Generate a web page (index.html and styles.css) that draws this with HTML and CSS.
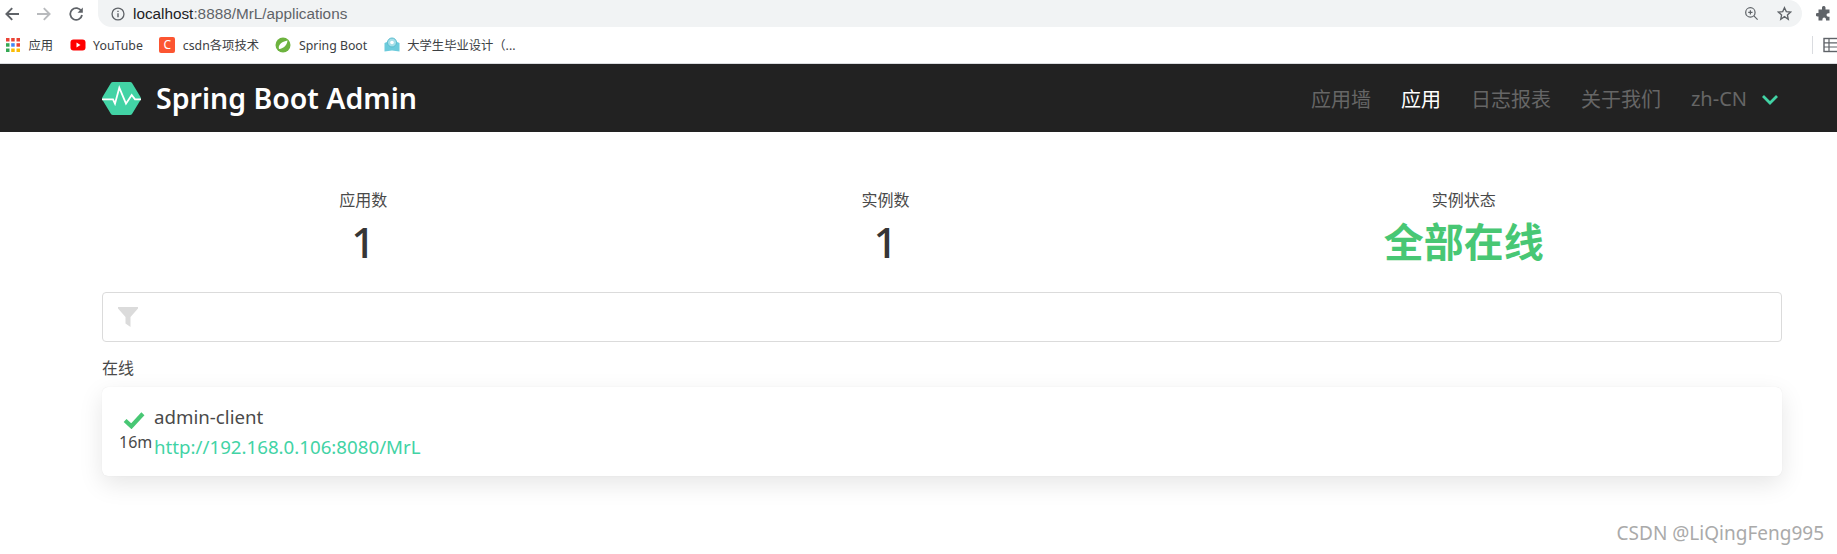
FILE: index.html

```html
<!DOCTYPE html>
<html lang="zh-CN">
<head>
  <meta charset="UTF-8" />
  <title>Spring Boot Admin</title>
  <link rel="stylesheet" href="styles.css">
</head>
<body>
  <div class="toolbar">
    <div class="nav-buttons">
      <svg class="tool-icon" viewBox="0 0 14 14"><path d="M14 7H1.500M7.200 1.200L1.400 7l5.800 5.800" fill="none" stroke="#5f6368" stroke-width="1.900"/></svg>
      <svg class="tool-icon" viewBox="0 0 14 14"><path d="M0 7h12.500M6.800 1.200L12.600 7l-5.800 5.800" fill="none" stroke="#b8babd" stroke-width="1.900"/></svg>
      <svg class="tool-icon" viewBox="0 0 14 14"><path d="M12.400 4.200A5.900 5.900 0 1 0 13 8" fill="none" stroke="#5f6368" stroke-width="1.800"/><path d="M13.800 0.500v5.300H8.500z" fill="#5f6368"/></svg>
    </div>
    <div class="omnibox">
      <svg class="info-icon" viewBox="0 0 16 16"><circle cx="8" cy="8" r="6.800" fill="none" stroke="#5f6368" stroke-width="1.500"/><path d="M7.200 7h1.600v4.800H7.200zM7.200 4.200h1.600v1.600H7.200z" fill="#5f6368"/></svg>
      <span class="url"><b>localhost</b>:8888/MrL/applications</span>
      <div class="omnibox-right">
        <svg class="omni-icon" viewBox="0 0 16 16"><circle cx="6.800" cy="6.800" r="5" fill="none" stroke="#5f6368" stroke-width="1.300"/><path d="M10.500 10.500l4 4M4.500 6.800h4.600M6.800 4.500v4.600" stroke="#5f6368" stroke-width="1.300" fill="none"/></svg>
        <svg class="omni-icon" viewBox="0 0 16 16"><path d="M8 1.800l1.900 4.200 4.600.5-3.400 3.100.9 4.500L8 11.300l-4 2.800.9-4.500-3.400-3.100 4.600-.5z" fill="none" stroke="#5f6368" stroke-width="1.400"/></svg>
      </div>
    </div>
    <svg class="puzzle" viewBox="0 0 16 16"><path d="M6 1.500a1.800 1.800 0 0 1 3.500 0V3.500h4v3.700h-1.200a1.800 1.800 0 0 0 0 3.600h1.200v3.700H10v-1.100a1.800 1.800 0 0 0-3.600 0v1.100H2.500v-4H1.500a1.800 1.800 0 0 1 0-3.600h1V3.500H6z" fill="#5f6368"/></svg>
  </div>

  <div class="bookmarks">
    <span class="bookmark">
      <svg class="bm-icon" viewBox="0 0 16 16">
        <g fill="#ea4335"><rect x="1" y="1" width="3.500" height="3.500"/><rect x="6.200" y="1" width="3.500" height="3.500"/><rect x="11.500" y="1" width="3.500" height="3.500"/></g>
        <rect x="1" y="6.200" width="3.500" height="3.500" fill="#34a853"/><rect x="6.200" y="6.200" width="3.500" height="3.500" fill="#4285f4"/><rect x="11.500" y="6.200" width="3.500" height="3.500" fill="#ea4335"/>
        <rect x="1" y="11.500" width="3.500" height="3.500" fill="#34a853"/><rect x="6.200" y="11.500" width="3.500" height="3.500" fill="#fbbc05"/><rect x="11.500" y="11.500" width="3.500" height="3.500" fill="#fbbc05"/>
      </svg>
      应用
    </span>
    <span class="bookmark">
      <svg class="bm-icon" viewBox="0 0 16 16"><rect x="0.500" y="2.500" width="15" height="11" rx="3" fill="#f00"/><path d="M6.500 5.500l4 2.500-4 2.500z" fill="#fff"/></svg>
      YouTube
    </span>
    <span class="bookmark">
      <span class="csdn-icon">C</span>
      csdn各项技术
    </span>
    <span class="bookmark">
      <svg class="bm-icon" viewBox="0 0 16 16"><circle cx="8" cy="8" r="7.500" fill="#6db33f"/><path d="M12.500 3.500C12 8 9 11.500 4 12c-1-3 1-7 8.500-8.500z" fill="#fff"/></svg>
      Spring Boot
    </span>
    <span class="bookmark">
      <svg class="bm-icon" viewBox="0 0 16 16"><path d="M0.500 6l3.500-1.500L8 7l4-2.500L15.500 6v8.500L8 13.500l-7.500 1z" fill="#6ccbdc"/><circle cx="8" cy="5.500" r="4.500" fill="#a5dfe9" stroke="#58bccf"/><circle cx="8" cy="5.500" r="1.800" fill="#fff"/></svg>
      大学生毕业设计（...
    </span>
    <span class="reading-list">
      <svg class="list-icon" viewBox="0 0 16 16"><rect x="1" y="1.500" width="14" height="13" fill="none" stroke="#5f6368" stroke-width="1.400"/><path d="M1 5.800h14M1 10h14M6 1.500v13" stroke="#5f6368" stroke-width="1.200"/></svg>
    </span>
  </div>

  <nav class="navbar">
    <div class="brand">
      <svg class="logo" viewBox="0 0 39 35">
        <path d="M11 1h17q1.500 0 2.200 1.300L38.500 16q.8 1.500 0 3l-8.300 13.700Q29.500 34 28 34H11q-1.500 0-2.200-1.300L.5 19q-.8-1.500 0-3L8.800 2.300Q9.500 1 11 1z" fill="#42d3a5"/>
        <path d="M0 18.300h11l2 4.400 4.300-16 6.700 16 5.700-8.700 3.300 4.300h6" fill="none" stroke="#fff" stroke-width="1.800"/>
      </svg>
      <span class="brand-name">Spring Boot Admin</span>
    </div>
    <div class="menu">
      <a class="menu-item">应用墙</a>
      <a class="menu-item active">应用</a>
      <a class="menu-item">日志报表</a>
      <a class="menu-item">关于我们</a>
      <a class="menu-item lang">zh-CN
        <svg class="chevron" viewBox="0 0 18 12"><path d="M2 2l7 7 7-7" fill="none" stroke="#42d3a5" stroke-width="2.800"/></svg>
      </a>
    </div>
  </nav>

  <main class="content">
    <div class="stats">
      <div class="stat">
        <p class="stat-label">应用数</p>
        <p class="stat-value">1</p>
      </div>
      <div class="stat">
        <p class="stat-label">实例数</p>
        <p class="stat-value">1</p>
      </div>
      <div class="stat">
        <p class="stat-label">实例状态</p>
        <p class="stat-value up">全部在线</p>
      </div>
    </div>

    <div class="filter">
      <svg class="filter-icon" viewBox="0 0 20 20"><path d="M0 0h20v1.500L12.500 10v10l-5-3.500V10L0 1.500z" fill="#dbdbdb"/></svg>
    </div>

    <p class="group-title">在线</p>

    <div class="card">
      <svg class="check" viewBox="0 0 21 17"><path d="M2 9l6 5.500L19 2.500" fill="none" stroke="#48c774" stroke-width="4"/></svg>
      <span class="app-name">admin-client</span>
      <span class="since">16m</span>
      <a class="app-url">http://192.168.0.106:8080/MrL</a>
    </div>
  </main>

  <div class="watermark">CSDN @LiQingFeng995</div>
</body>
</html>
```

FILE: styles.css

```css
html, body {
  margin: 0;
  padding: 0;
}
body {
  position: relative;
  height: 554px;
  overflow: hidden;
  background-color: white;
  color: #4a4a4a;
  font-family: "Noto Sans", "Noto Sans CJK SC", sans-serif;
  font-size: 16px;
}
p {
  margin: 0;
}

/* browser chrome */
.toolbar {
  display: flex;
  align-items: center;
  height: 27px;
  background-color: white;
}
.nav-buttons {
  display: flex;
  align-items: center;
  gap: 18px;
  width: 98px;
  padding-left: 5px;
  box-sizing: border-box;
}
.tool-icon {
  width: 14px;
  height: 14px;
}
.omnibox {
  display: flex;
  align-items: center;
  width: 1704px;
  height: 27px;
  padding: 0 10px 0 13px;
  box-sizing: border-box;
  background-color: #f1f3f4;
  border-radius: 0 14px 14px 14px;
}
.info-icon {
  width: 14px;
  height: 14px;
  margin-right: 8px;
}
.url {
  font-family: "Liberation Sans", sans-serif;
  font-size: 15.3px;
  color: #5f6368;
}
.url b {
  font-weight: normal;
  color: #202124;
}
.omnibox-right {
  display: flex;
  align-items: center;
  gap: 18px;
  margin-left: auto;
}
.omni-icon {
  width: 15px;
  height: 15px;
}
.puzzle {
  width: 16px;
  height: 16px;
  margin-left: 14px;
}
.bookmarks {
  display: flex;
  align-items: center;
  gap: 16.500px;
  height: 37px;
  padding-left: 5px;
  border-bottom: 1px solid #dadce0;
  box-sizing: border-box;
  font-size: 12.3px;
  color: #3c4043;
}
.bookmark {
  display: flex;
  align-items: center;
  gap: 7.500px;
}
.bm-icon {
  width: 16px;
  height: 16px;
}
.csdn-icon {
  width: 16px;
  height: 16px;
  background-color: #fc5531;
  border-radius: 2px;
  color: white;
  font-size: 12px;
  line-height: 16px;
  text-align: center;
}
.reading-list {
  margin-left: auto;
  padding-left: 10px;
  height: 18px;
  border-left: 1px solid #dadce0;
  display: flex;
  align-items: center;
  width: 14px;
  overflow: hidden;
}
.list-icon {
  flex: none;
  width: 16px;
  height: 16px;
}

/* app navbar */
.navbar {
  display: flex;
  align-items: center;
  justify-content: space-between;
  height: 68px;
  padding: 0 58px 0 102px;
  background-color: #222;
}
.brand {
  display: flex;
  align-items: center;
  gap: 15px;
}
.logo {
  width: 39px;
  height: 35px;
}
.brand-name {
  color: white;
  font-size: 28.5px;
  font-weight: 600;
}
.menu {
  display: flex;
  align-items: center;
  gap: 30px;
}
.menu-item {
  display: flex;
  align-items: center;
  gap: 14px;
  color: #666;
  font-size: 20px;
}
.menu-item.active {
  color: white;
}
.chevron {
  width: 18px;
  height: 12px;
  margin-top: 4px;
}

/* page */
.content {
  padding: 0 55px 0 102px;
}
.stats {
  display: flex;
  justify-content: space-around;
  padding: 56px 1px 0 0;
  text-align: center;
}
.stat-label {
  font-size: 16px;
  line-height: 24px;
}
.stat-value {
  color: #363636;
  font-size: 42px;
  font-weight: 500;
  line-height: 60px;
}
.stat-value.up {
  color: #48c774;
  font-size: 40px;
  font-weight: 700;
}
.filter {
  display: flex;
  align-items: center;
  height: 50px;
  margin-top: 20px;
  padding-left: 15px;
  border: 1px solid #dbdbdb;
  border-radius: 4px;
  box-sizing: border-box;
}
.filter-icon {
  width: 20px;
  height: 20px;
}
.group-title {
  margin-top: 14px;
  font-size: 16px;
  line-height: 24px;
}
.card {
  display: grid;
  grid-template-columns: 35px auto;
  grid-template-rows: 30px 30px;
  justify-content: start;
  align-items: center;
  height: 89px;
  margin-top: 7px;
  padding: 15px 17px;
  box-sizing: border-box;
  background-color: white;
  border-radius: 6px;
  box-shadow: 0 8px 24px rgba(10, 10, 10, 0.1), 0 0 1px rgba(10, 10, 10, 0.1);
}
.check {
  justify-self: start;
  margin: 6px 0 0 4px;
  width: 22px;
  height: 18px;
}
.app-name {
  font-size: 18.7px;
  line-height: 30px;
}
.since {
  margin-top: -10px;
  font-size: 16px;
  line-height: 24px;
  color: #4a4a4a;
}
.app-url {
  color: #42d3a5;
  font-size: 18.7px;
  line-height: 30px;
}
.watermark {
  position: absolute;
  right: 13px;
  bottom: 8px;
  color: #aaa;
  font-size: 19px;
}
```
